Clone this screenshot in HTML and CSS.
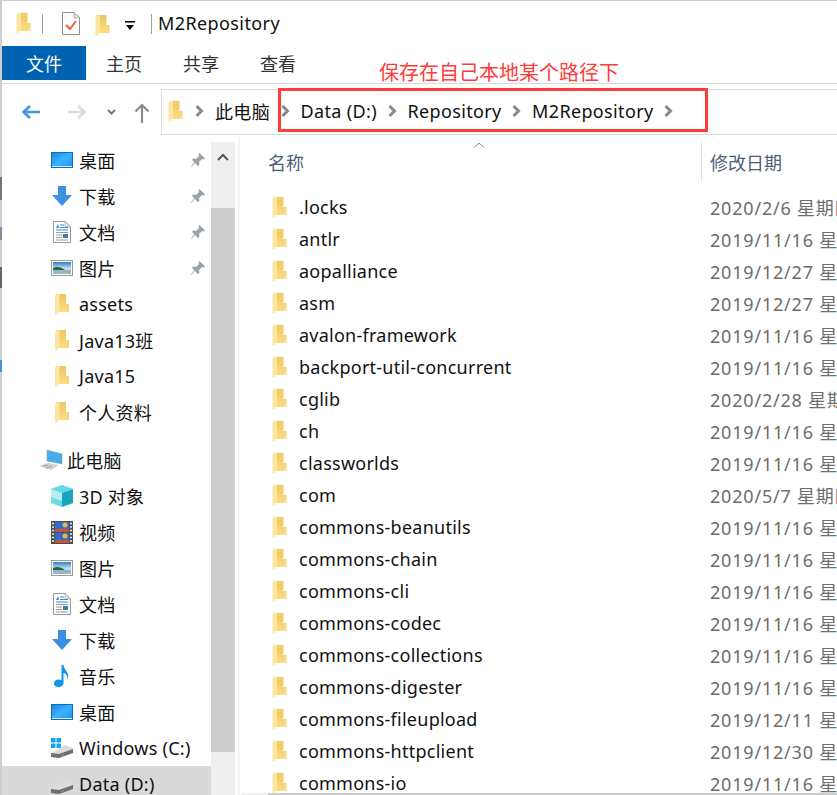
FILE: index.html
```html
<!DOCTYPE html>
<html lang="zh-CN">
<head>
<meta charset="UTF-8">
<title>M2Repository</title>
<link rel="stylesheet" href="styles.css">
</head>
<body>
<svg class="defs" width="0" height="0">
  <defs>
    <linearGradient id="fold" x1="0" y1="0" x2="0" y2="1"><stop offset="0" stop-color="#efc761"/><stop offset="1" stop-color="#fbdc85"/></linearGradient>
    <linearGradient id="sky" x1="0" y1="0" x2="0" y2="1"><stop offset="0" stop-color="#2b7fc4"/><stop offset=".5" stop-color="#b9dcec"/><stop offset="1" stop-color="#dfe9ee"/></linearGradient>
    <linearGradient id="scr" x1="0" y1="0" x2="1" y2="1"><stop offset="0" stop-color="#0f86e0"/><stop offset=".5" stop-color="#3db0ff"/><stop offset="1" stop-color="#1a93f0"/></linearGradient>
    <symbol id="i-folder" viewBox="0 0 14 21">
      <path d="M1 0H11V10H14V18H1Z" fill="url(#fold)"/>
      <path d="M0 1L4.500 0V17.500L1 21L0 20Z" fill="#fbe6a4"/>
    </symbol>
    <symbol id="i-desk" viewBox="0 0 22 16">
      <rect x=".5" y=".5" width="21" height="15" fill="url(#scr)" stroke="#0b6fb8"/>
      <rect x="1" y="14" width="20" height="1" fill="#d6eefc"/>
    </symbol>
    <symbol id="i-down" viewBox="0 0 20 20">
      <path d="M6 0H14V9H20L10 20L0 9H6Z" fill="#3d8fe2"/>
    </symbol>
    <symbol id="i-doc" viewBox="0 0 18 22">
      <path d="M.5.5H12L17.500 6V21.500H.5Z" fill="#fff" stroke="#9a9a9a"/>
      <path d="M12 .5V6H17.500Z" fill="#e4e4e4" stroke="#9a9a9a" stroke-width=".6"/>
      <path d="M3 7L5 3L6 7Z" fill="#2f8fdc"/>
      <path d="M7 4H11M7 6.500H15M3 9H15" stroke="#2f8fdc"/>
      <path d="M3 11.500H15M3 14H9M3 16.500H9M3 19H15" stroke="#9a9a9a"/>
      <rect x="10" y="13" width="5" height="4" fill="#3f7f9f"/>
    </symbol>
    <symbol id="i-pic" viewBox="0 0 22 16">
      <rect x=".5" y=".5" width="21" height="15" fill="#fff" stroke="#9c9c9c"/>
      <rect x="2" y="2" width="18" height="12" fill="url(#sky)"/>
      <path d="M2 8C6 6 10 7 14 10H2Z" fill="#2d5f45"/>
      <path d="M2 10H20V14H2Z" fill="#7fa3b5" opacity=".7"/>
    </symbol>
    <symbol id="i-pin" viewBox="0 0 16 16">
      <path d="M9.500 1L15 6.500L13.500 7.500L12 7L9 10L9.500 13L8 14L5 11L1.500 15L1 14.500L4.500 10.500L2 8L3 6.500L6 7L9 4L8.500 2.500Z" fill="#98a3a9"/>
    </symbol>
    <symbol id="i-pc" viewBox="0 0 24 20">
      <path d="M8 0L23 4V14L8 11Z" fill="#45aeea" stroke="#7d9db3" stroke-width=".6"/>
      <path d="M0 16L9 13L20 15L12 20Z" fill="#cfd3d6"/>
      <path d="M4 16L9 15M7 18L13 16" stroke="#9aa0a5"/>
    </symbol>
    <symbol id="i-cube" viewBox="0 0 22 22">
      <path d="M11 0L22 4V18L11 22L0 18V4Z" fill="#b8eef0"/>
      <path d="M11 0L22 4L11 8L0 4Z" fill="#63d8e6"/>
      <path d="M11 8L22 4V18L11 22Z" fill="#18a5bd"/>
      <path d="M0 12L11 16V22L0 18Z" fill="#6fdbe2"/>
    </symbol>
    <symbol id="i-film" viewBox="0 0 22 23">
      <rect width="22" height="23" fill="#4f4f4f"/>
      <rect x="4" y="1" width="14" height="10" fill="#2f6fc9"/>
      <rect x="4" y="12" width="14" height="10" fill="#2f6fc9"/>
      <path d="M4 8H18V11H4ZM4 19H18V22H4Z" fill="#c9553f"/>
      <circle cx="14" cy="4" r="2.500" fill="#e9b73c"/>
      <circle cx="14" cy="15" r="2.500" fill="#e9b73c"/>
      <path d="M1 2.500H3M1 6H3M1 9.500H3M1 13H3M1 16.500H3M1 20H3M19 2.500H21M19 6H21M19 9.500H21M19 13H21M19 16.500H21M19 20H21" stroke="#eee" stroke-width="1.600"/>
    </symbol>
    <symbol id="i-note" viewBox="0 0 17 22">
      <path d="M8 0H10C10 5 17 7 14 15C14 10 12 8.500 10 8V18C10 20.500 7.500 22 4.500 22C2 22 .5 20.500 .5 18.500C.5 16 3 14.500 5.500 14.500C6.500 14.500 7.500 14.700 8 15Z" fill="#0e97e8"/>
    </symbol>
    <symbol id="i-drive" viewBox="0 0 22 14">
      <path d="M0 9L14 1L22 4V8L8 13L0 12Z" fill="#dcdcdc"/>
      <path d="M0 9L8 10L22 5V9L8 14L0 13Z" fill="#6f6f6f"/>
      <path d="M10 11.500L13 10.500" stroke="#58c060"/>
    </symbol>
    <symbol id="i-win" viewBox="0 0 10 10">
      <path d="M0 0H4.500V4.500H0ZM5.500 0H10V4.500H5.500ZM0 5.500H4.500V10H0ZM5.500 5.500H10V10H5.500Z" fill="#12a5ee"/>
    </symbol>
    <symbol id="i-chev" viewBox="0 0 9 12">
      <path d="M1.500 1L6.500 6L1.500 11" fill="none" stroke="#8a8a8a" stroke-width="3"/>
    </symbol>
  </defs>
</svg>

<div class="edge"></div>
<div class="window">
  <div class="titlebar">
    <svg class="folder qa-first"><use href="#i-folder"/></svg>
    <span class="qa-sep"></span>
    <svg class="qa-check" viewBox="0 0 18 23">
      <path d="M.5.5H12L17.500 6V22.500H.5Z" fill="#fff" stroke="#8f8f8f"/>
      <path d="M12 .5V6H17.500Z" fill="#e8e8e8" stroke="#8f8f8f" stroke-width=".6"/>
      <path d="M4 13L8 17L14 9" fill="none" stroke="#f0602a" stroke-width="2"/>
    </svg>
    <svg class="folder qa-second"><use href="#i-folder"/></svg>
    <svg class="qa-drop" viewBox="0 0 10 10"><path d="M0 0H10V1.500H0ZM1 4H9L5 9Z" fill="#000"/></svg>
    <span class="qa-sep qa-sep-last"></span>
    <span class="title">M2Repository</span>
  </div>

  <div class="ribbon">
    <span class="tab-file">文件</span>
    <span class="tab">主页</span>
    <span class="tab">共享</span>
    <span class="tab">查看</span>
  </div>

  <div class="addressrow">
    <svg class="nav-btn back" viewBox="0 0 20 16"><path d="M19 8H3M9 2L2.500 8L9 14" fill="none" stroke="#4a90e2" stroke-width="2.600"/></svg>
    <svg class="nav-btn forward" viewBox="0 0 20 16"><path d="M1 8H17M11 2L17.500 8L11 14" fill="none" stroke="#dcdcdc" stroke-width="2.600"/></svg>
    <svg class="nav-btn recent" viewBox="0 0 9 6"><path d="M1 1L4.500 4.500L8 1" fill="none" stroke="#7a7a7a" stroke-width="2"/></svg>
    <svg class="nav-btn up" viewBox="0 0 16 20"><path d="M8 20V2M1.500 8.500L8 2L14.500 8.500" fill="none" stroke="#8a8a8a" stroke-width="2.200"/></svg>
    <div class="crumbs">
      <svg class="folder crumb-folder"><use href="#i-folder"/></svg>
      <svg class="chev"><use href="#i-chev"/></svg>
      <span class="crumb">此电脑</span>
      <svg class="chev"><use href="#i-chev"/></svg>
      <span class="crumb">Data (D:)</span>
      <svg class="chev"><use href="#i-chev"/></svg>
      <span class="crumb">Repository</span>
      <svg class="chev"><use href="#i-chev"/></svg>
      <span class="crumb">M2Repository</span>
      <svg class="chev"><use href="#i-chev"/></svg>
    </div>
  </div>

  <div class="body">
    <nav class="tree">
      <div class="node"><svg class="ico h16"><use href="#i-desk"/></svg>桌面<svg class="pin"><use href="#i-pin"/></svg></div>
      <div class="node"><svg class="ico h20"><use href="#i-down"/></svg>下载<svg class="pin"><use href="#i-pin"/></svg></div>
      <div class="node"><svg class="ico h22"><use href="#i-doc"/></svg>文档<svg class="pin"><use href="#i-pin"/></svg></div>
      <div class="node"><svg class="ico h16"><use href="#i-pic"/></svg>图片<svg class="pin"><use href="#i-pin"/></svg></div>
      <div class="node"><svg class="ico h21"><use href="#i-folder"/></svg>assets</div>
      <div class="node"><svg class="ico h21"><use href="#i-folder"/></svg>Java13班</div>
      <div class="node"><svg class="ico h21"><use href="#i-folder"/></svg>Java15</div>
      <div class="node"><svg class="ico h21"><use href="#i-folder"/></svg>个人资料</div>
      <div class="node node-pc"><svg class="ico-pc"><use href="#i-pc"/></svg>此电脑</div>
      <div class="node"><svg class="ico h22"><use href="#i-cube"/></svg>3D 对象</div>
      <div class="node"><svg class="ico h23"><use href="#i-film"/></svg>视频</div>
      <div class="node"><svg class="ico h16"><use href="#i-pic"/></svg>图片</div>
      <div class="node"><svg class="ico h22"><use href="#i-doc"/></svg>文档</div>
      <div class="node"><svg class="ico h20"><use href="#i-down"/></svg>下载</div>
      <div class="node"><svg class="ico h22"><use href="#i-note"/></svg>音乐</div>
      <div class="node"><svg class="ico h16"><use href="#i-desk"/></svg>桌面</div>
      <div class="node"><span class="ico-drive"><svg class="win"><use href="#i-win"/></svg><svg class="drive"><use href="#i-drive"/></svg></span>Windows (C:)</div>
      <div class="node selected"><span class="ico-drive"><svg class="drive"><use href="#i-drive"/></svg></span>Data (D:)</div>
    </nav>

    <div class="vscroll">
      <div class="vscroll-up"><svg viewBox="0 0 12 8"><path d="M1 7L6 2L11 7" fill="none" stroke="#555" stroke-width="2"/></svg></div>
      <div class="vscroll-thumb"></div>
      <div class="vscroll-rest"></div>
    </div>
    <div class="pane-gap"></div>

    <main class="files">
      <div class="headers">
        <div class="col-name">名称<svg class="sort" viewBox="0 0 12 6"><path d="M1 5.500L6 1L11 5.500" fill="none" stroke="#8a8a8a"/></svg></div>
        <div class="col-date">修改日期</div>
      </div>
      <div class="rows">
        <div class="row"><div class="cell-name"><svg class="folder"><use href="#i-folder"/></svg>.locks</div><div class="cell-date">2020/2/6 星期四</div></div>
        <div class="row"><div class="cell-name"><svg class="folder"><use href="#i-folder"/></svg>antlr</div><div class="cell-date">2019/11/16 星期六</div></div>
        <div class="row"><div class="cell-name"><svg class="folder"><use href="#i-folder"/></svg>aopalliance</div><div class="cell-date">2019/12/27 星期五</div></div>
        <div class="row"><div class="cell-name"><svg class="folder"><use href="#i-folder"/></svg>asm</div><div class="cell-date">2019/12/27 星期五</div></div>
        <div class="row"><div class="cell-name"><svg class="folder"><use href="#i-folder"/></svg>avalon-framework</div><div class="cell-date">2019/11/16 星期六</div></div>
        <div class="row"><div class="cell-name"><svg class="folder"><use href="#i-folder"/></svg>backport-util-concurrent</div><div class="cell-date">2019/11/16 星期六</div></div>
        <div class="row"><div class="cell-name"><svg class="folder"><use href="#i-folder"/></svg>cglib</div><div class="cell-date">2020/2/28 星期五</div></div>
        <div class="row"><div class="cell-name"><svg class="folder"><use href="#i-folder"/></svg>ch</div><div class="cell-date">2019/11/16 星期六</div></div>
        <div class="row"><div class="cell-name"><svg class="folder"><use href="#i-folder"/></svg>classworlds</div><div class="cell-date">2019/11/16 星期六</div></div>
        <div class="row"><div class="cell-name"><svg class="folder"><use href="#i-folder"/></svg>com</div><div class="cell-date">2020/5/7 星期四</div></div>
        <div class="row"><div class="cell-name"><svg class="folder"><use href="#i-folder"/></svg>commons-beanutils</div><div class="cell-date">2019/11/16 星期六</div></div>
        <div class="row"><div class="cell-name"><svg class="folder"><use href="#i-folder"/></svg>commons-chain</div><div class="cell-date">2019/11/16 星期六</div></div>
        <div class="row"><div class="cell-name"><svg class="folder"><use href="#i-folder"/></svg>commons-cli</div><div class="cell-date">2019/11/16 星期六</div></div>
        <div class="row"><div class="cell-name"><svg class="folder"><use href="#i-folder"/></svg>commons-codec</div><div class="cell-date">2019/11/16 星期六</div></div>
        <div class="row"><div class="cell-name"><svg class="folder"><use href="#i-folder"/></svg>commons-collections</div><div class="cell-date">2019/11/16 星期六</div></div>
        <div class="row"><div class="cell-name"><svg class="folder"><use href="#i-folder"/></svg>commons-digester</div><div class="cell-date">2019/11/16 星期六</div></div>
        <div class="row"><div class="cell-name"><svg class="folder"><use href="#i-folder"/></svg>commons-fileupload</div><div class="cell-date">2019/12/11 星期三</div></div>
        <div class="row"><div class="cell-name"><svg class="folder"><use href="#i-folder"/></svg>commons-httpclient</div><div class="cell-date">2019/12/30 星期一</div></div>
        <div class="row"><div class="cell-name"><svg class="folder"><use href="#i-folder"/></svg>commons-io</div><div class="cell-date">2019/11/16 星期六</div></div>
      </div>
      <div class="hscroll"><div class="hscroll-thumb"></div></div>
    </main>
  </div>

  <div class="note">保存在自己本地某个路径下</div>
  <div class="redbox"></div>
</div>
</body>
</html>
```

FILE: styles.css
```css
* { box-sizing: border-box; }
html, body { margin: 0; height: 100%; overflow: hidden; background: #fff; }
body {
  display: flex;
  font-family: "Noto Sans", "Noto Sans CJK SC", sans-serif;
  font-size: 18px;
  letter-spacing: .25px;
  color: #111;
}
.defs { position: absolute; }

/* the bit of the desktop showing down the left side */
.edge {
  width: 2px;
  flex: none;
  background: linear-gradient(#cfcfcf 177px, #777 177px, #777 200px, #cfcfcf 200px, #cfcfcf 227px, #889 227px, #889 240px, #cfcfcf 240px, #cfcfcf 267px, #666 267px, #666 288px, #cfcfcf 288px, #cfcfcf 360px, #4a90d9 360px, #4a90d9 372px, #cfcfcf 372px);
}
.window {
  flex: 1;
  min-width: 0;
  height: 795px;
  display: flex;
  flex-direction: column;
  position: relative;
}

.folder { width: 15px; height: 21px; flex: none; }

/* title bar */
.titlebar {
  height: 46px;
  flex: none;
  display: flex;
  align-items: center;
  border-top: 1px solid #ccc;
  padding-left: 14px;
}
.qa-first { margin-top: -1px; }
.qa-sep { width: 1px; height: 20px; background: #a0a0a0; margin-left: 11px; flex: none; }
.qa-check { width: 18px; height: 23px; margin-left: 19px; }
.qa-second { margin-left: 15px; margin-top: 3px; }
.qa-drop { width: 10px; height: 10px; margin-left: 15px; margin-top: 5px; }
.qa-sep-last { margin-left: 16px; }
.title { margin-left: 6px; margin-top: -2px; letter-spacing: .4px; }

/* ribbon */
.ribbon {
  height: 38px;
  flex: none;
  display: flex;
  align-items: flex-start;
  border-bottom: 1px solid #d9d9d9;
  letter-spacing: 0;
}
.tab-file {
  width: 84px;
  height: 34px;
  background: #0063b1;
  color: #fff;
  display: flex;
  align-items: center;
  justify-content: center;
  margin-right: 20px;
}
.tab { width: 36px; height: 34px; display: flex; align-items: center; margin-right: 41px; color: #333; }

/* address row */
.addressrow {
  height: 51px;
  flex: none;
  display: flex;
  align-items: flex-start;
}
.nav-btn { flex: none; margin-top: 20px; }
.back { width: 20px; height: 16px; margin-left: 19px; }
.forward { width: 20px; height: 16px; margin-left: 26px; }
.recent { width: 9px; height: 6px; margin-left: 20px; margin-top: 25px; }
.up { width: 16px; height: 20px; margin-left: 18px; margin-top: 19px; }
.crumbs {
  flex: 1;
  height: 46px;
  margin-top: 5px;
  margin-left: 11px;
  border: 1px solid #d9d9d9;
  border-right: none;
  display: flex;
  align-items: center;
  padding-left: 6px;
  padding-bottom: 2px;
  white-space: nowrap;
  letter-spacing: .35px;
}
.crumb-folder { margin-right: 12px; }
.chev { width: 9px; height: 12px; flex: none; margin-right: 11px; }
.crumb { margin-right: 10.5px; }

/* navigation tree */
.body { flex: 1; min-height: 0; display: flex; }
.tree {
  width: 209px;
  flex: none;
  padding-top: 7px;
  overflow: hidden;
}
.node {
  height: 36px;
  display: flex;
  align-items: center;
  padding-left: 49px;
  white-space: nowrap;
}
.node-pc { margin-top: 12px; padding-left: 37px; }
.selected { background: #d9d9d9; margin-top: 0; }
.ico, .ico-pc { flex: none; width: 22px; margin-right: 6px; }
.h16 { height: 16px; }
.h20 { height: 20px; }
.h21 { height: 21px; }
.h22 { height: 22px; }
.h23 { height: 23px; }
.ico-pc { width: 24px; height: 20px; margin-right: 4px; }
.pin { width: 16px; height: 16px; margin-left: auto; margin-right: 5px; flex: none; }
.ico-drive { width: 22px; height: 20px; flex: none; margin-right: 6px; position: relative; display: block; }
.win { width: 10px; height: 10px; position: absolute; left: 0; top: 0; }
.drive { width: 22px; height: 14px; position: absolute; left: 0; bottom: 0; }

/* tree scrollbar */
.vscroll {
  width: 24px;
  flex: none;
  padding-top: 7px;
  display: flex;
  flex-direction: column;
}
.vscroll-up {
  height: 66px;
  flex: none;
  background: #efefef;
  display: flex;
  justify-content: center;
  padding-top: 11px;
}
.vscroll-up svg { width: 12px; height: 8px; }
.vscroll-thumb { height: 544px; flex: none; background: #cdcdcd; }
.vscroll-rest { flex: 1; background: #efefef; }
.pane-gap { width: 5px; flex: none; background: linear-gradient(90deg, #fff 3px, #f6f6f6 3px); }

/* file list */
.files {
  flex: 1;
  min-width: 0;
  padding-top: 7px;
  display: flex;
  flex-direction: column;
  overflow: hidden;
}
.headers {
  height: 40px;
  flex: none;
  display: grid;
  grid-template-columns: 461px 1fr;
  color: #4c607a;
  margin-bottom: 9px;
  letter-spacing: 0;
}
.col-name { position: relative; padding-left: 28px; display: flex; align-items: center; }
.sort { position: absolute; left: 233px; top: 0; width: 12px; height: 6px; }
.col-date {
  border-left: 1px solid #e3e3e3;
  padding-left: 8px;
  display: flex;
  align-items: center;
  white-space: nowrap;
}
.rows { flex: 1; min-height: 0; overflow: hidden; }
.row {
  height: 32px;
  display: grid;
  grid-template-columns: 470px 1fr;
  white-space: nowrap;
}
.cell-name { display: flex; align-items: center; padding-left: 32px; }
.cell-name .folder { margin-right: 12px; }
.cell-date { display: flex; align-items: center; color: #6d6d6d; overflow: hidden; letter-spacing: .8px; }
.hscroll { height: 2px; flex: none; background: #f0f0f0; margin-left: 2px; padding-left: 26px; }
.hscroll-thumb { height: 2px; background: #cdcdcd; }

/* red markup pasted over the screenshot */
.note {
  position: absolute;
  left: 377px;
  top: 59px;
  font-size: 20px;
  line-height: 28px;
  letter-spacing: 0;
  color: #ff3b3b;
  white-space: nowrap;
}
.redbox {
  position: absolute;
  left: 276px;
  top: 88px;
  width: 430px;
  height: 44px;
  border: 3px solid #ff3b3b;
}
```
